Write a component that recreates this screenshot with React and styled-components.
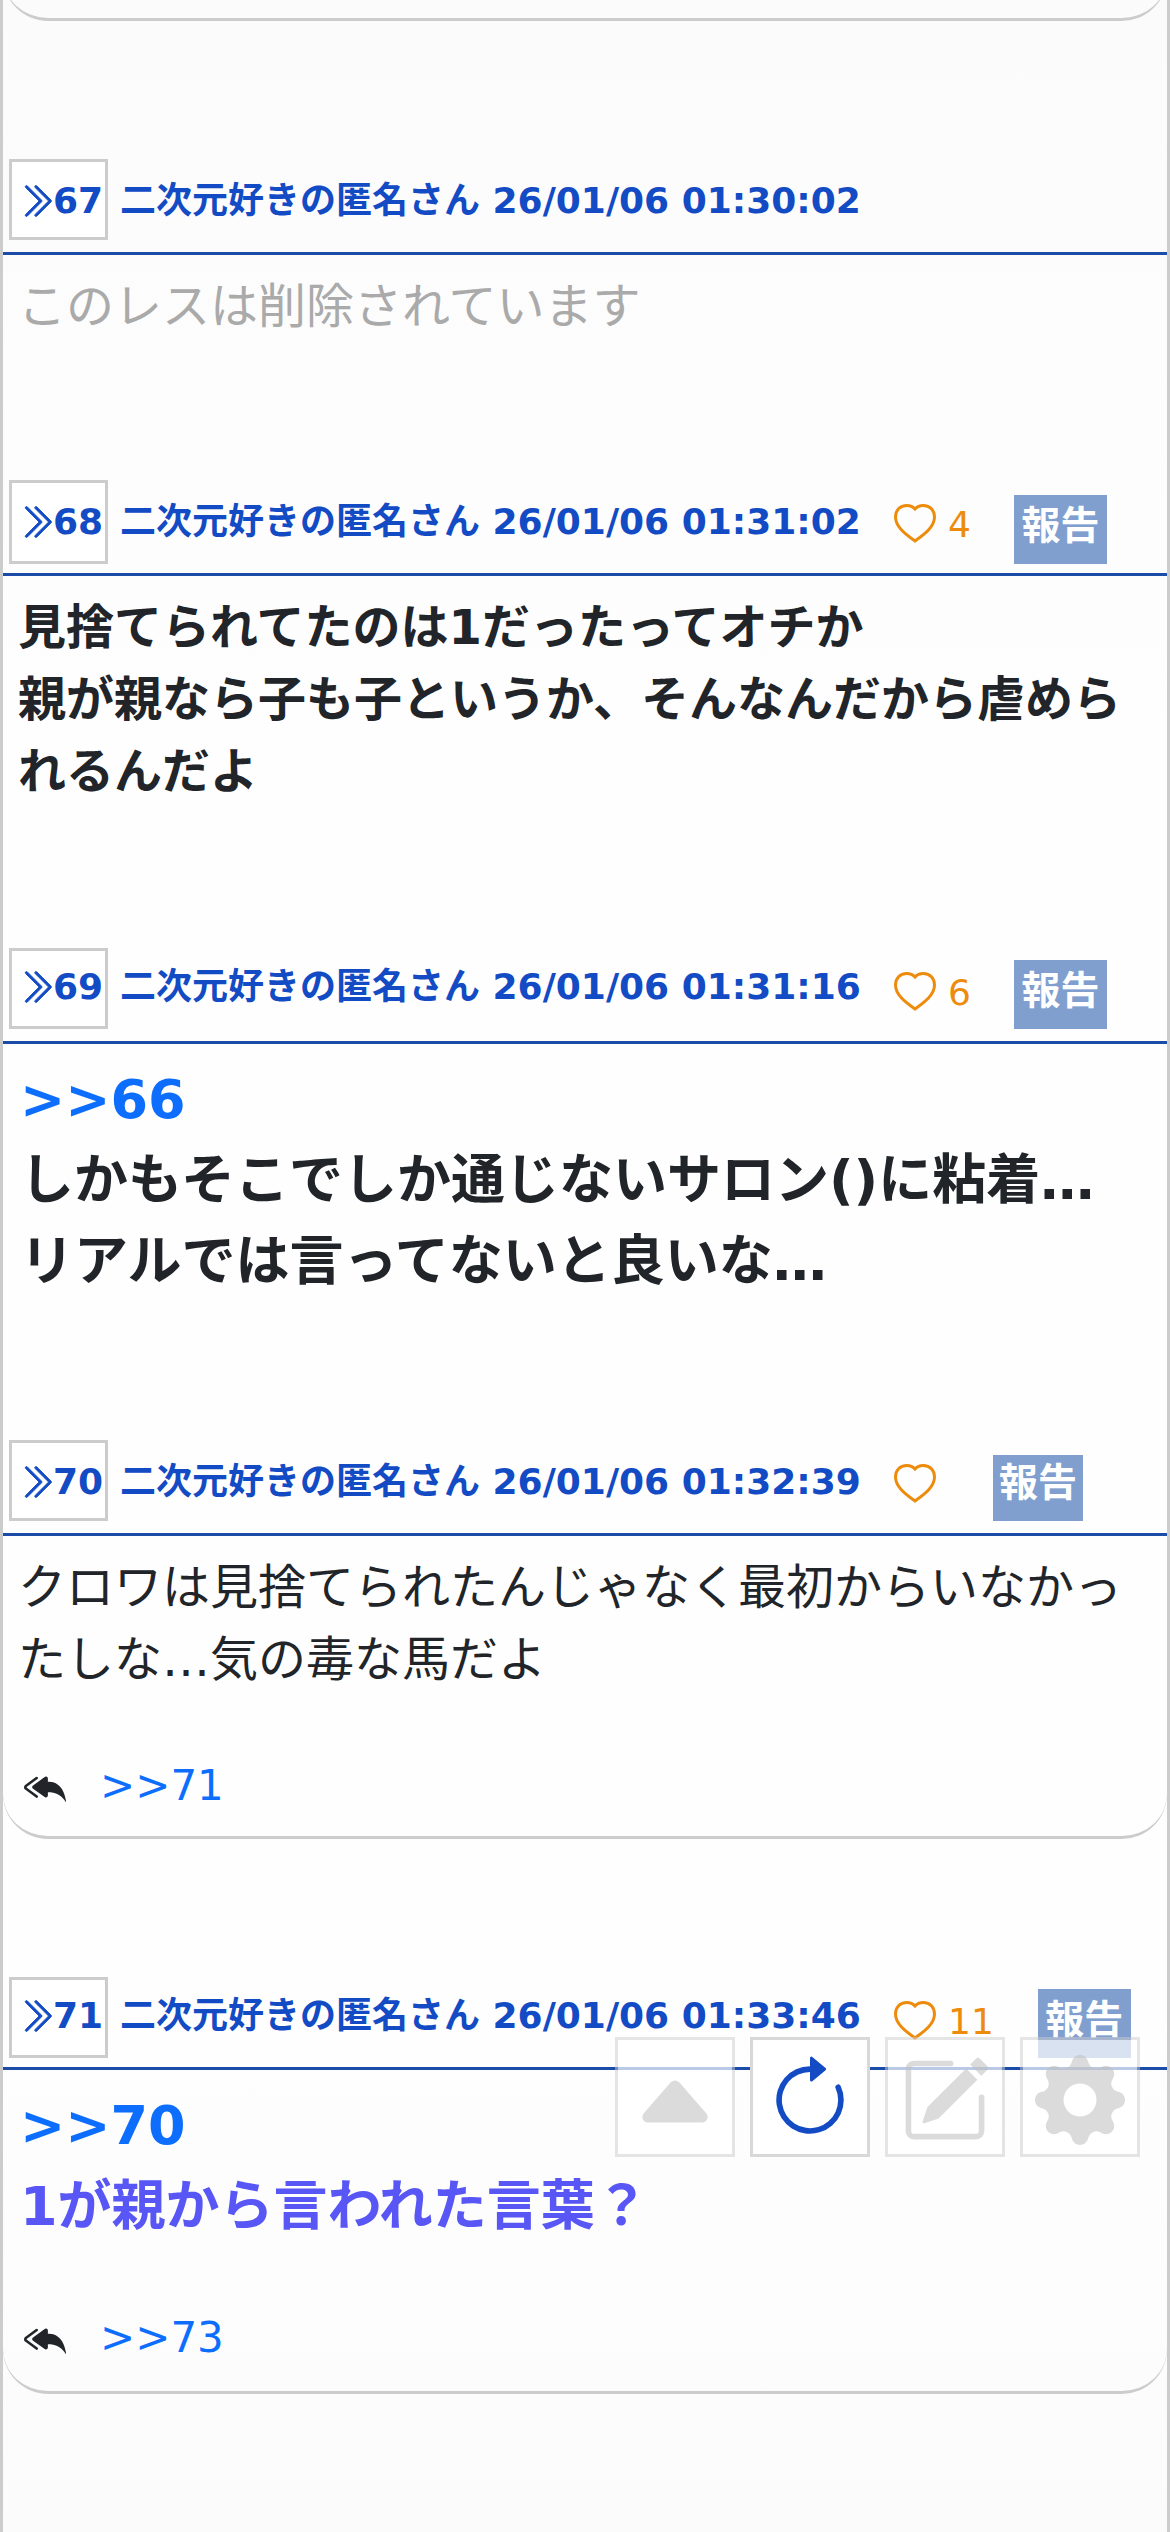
import React from 'react';
import styled, { createGlobalStyle } from 'styled-components';
import {
    BsArrowClockwise,
    BsCaretUpFill,
    BsChevronDoubleRight,
    BsGearFill,
    BsPencilSquare,
    BsReplyAllFill,
} from 'react-icons/bs';

const GlobalStyle = createGlobalStyle`
    * {
        box-sizing: border-box;
    }

    body {
        margin: 0;
        background-color: #fcfcfc;
        color: #212529;
        font-family: 'DejaVu Sans', 'Noto Sans CJK JP', sans-serif;
    }
`;

const Container = styled.div`
    height: 2532px;
    overflow: hidden;
    border-left: 3px solid #ccc;
    border-right: 3px solid #ccc;
    background: linear-gradient(#fbfbfb, #fefefe 30%, #fefefe 80%, #fbfbfb);
`;

const Post = styled.div`
    height: ${(props) => props.$height}px;
    margin-bottom: ${(props) => (props.$closed ? 138 : 0)}px;
    border-bottom: ${(props) => (props.$closed ? '3px solid #ccc' : 'none')};
    border-radius: ${(props) => (props.$closed ? '0 0 45px 45px' : '0')};
`;

const PreviousPost = styled(Post)`
    margin-top: -69px;
`;

const Header = styled.div`
    display: flex;
    align-items: stretch;
    height: ${(props) => props.$height}px;
    padding: 0 0 ${(props) => props.$gap}px 6px;
    border-bottom: 3px solid #1a4ca8;
    color: #124bc4;
    font-size: 36px;
    line-height: 54px;
    white-space: nowrap;
`;

const Number = styled.div`
    display: flex;
    width: 99px;
    flex-shrink: 0;
    padding: ${(props) => props.$top - 3}px 0 0 5px;
    border: 3px solid #ccc;
    background-color: white;
    font-weight: bold;

    svg {
        flex-shrink: 0;
        width: 38px;
        height: 38px;
        margin: 8px -2px 0 0;
        stroke-width: 0.4;
    }
`;

const Name = styled.div`
    width: 738px;
    margin-left: 12px;
    padding-top: ${(props) => props.$top}px;
    font-weight: bold;
`;

const Good = styled.div`
    display: flex;
    margin-left: 36px;
    padding-top: 18px;
    color: #ed8c0c;

    svg {
        width: 42px;
        height: 39px;
        margin: 6px 12px 0 0;
    }
`;

const Report = styled.div`
    width: ${(props) => props.$width}px;
    margin: ${(props) => props.$top}px 0 0 ${(props) => props.$left}px;
    background-color: #809fcf;
    color: white;
    font-size: 39px;
    font-weight: bold;
    line-height: ${(props) => props.$line}px;
    text-align: center;
`;

const Body = styled.div`
    padding: 15px ${(props) => (props.$large ? 17 : 15)}px 0;
    color: ${(props) => props.$color || '#212529'};
    font-size: ${(props) => (props.$large ? 54 : 48)}px;
    font-weight: ${(props) => (props.$bold ? 'bold' : 'normal')};
    line-height: 1.5;
    white-space: nowrap;
`;

const Anchor = styled.a`
    color: #0d6efd;
`;

const Replies = styled.div`
    display: flex;
    align-items: center;
    gap: 34px;
    margin-top: 59px;
    padding-left: 21px;
    font-size: 42px;
    line-height: 63px;

    svg {
        width: 42px;
        height: 42px;
        margin-top: 2px;
    }
`;

const Toolbar = styled.div`
    position: fixed;
    left: 615px;
    top: 2037px;
    display: flex;
    gap: 15px;
`;

const ToolButton = styled.div`
    display: flex;
    align-items: center;
    justify-content: center;
    width: 120px;
    height: 120px;
    padding-top: 6px;
    border: 3px solid ${(props) => (props.$active ? '#d8d8d8' : 'rgba(204, 204, 204, 0.5)')};
    background-color: ${(props) => (props.$active ? 'white' : 'rgba(255, 255, 255, 0.7)')};
    background-clip: padding-box;
    color: ${(props) => (props.$active ? '#124bc4' : 'rgba(190, 190, 190, 0.55)')};

    svg {
        width: 90px;
        height: 90px;
    }
`;

const posts = [
    {
        no: 67,
        time: '01:30:02',
        height: 321,
        box: 81,
        gap: 12,
        top: 14.5,
        deleted: true,
        lines: ['このレスは削除されています'],
    },
    {
        no: 68,
        time: '01:31:02',
        height: 468,
        box: 84,
        gap: 9,
        top: 14.5,
        good: 4,
        report: { top: 15, left: 43, width: 93, line: 62 },
        bold: true,
        lines: [
            '見捨てられてたのは1だったってオチか',
            '親が親なら子も子というか、そんなんだから虐めら',
            'れるんだよ',
        ],
    },
    {
        no: 69,
        time: '01:31:16',
        height: 492,
        box: 81,
        gap: 12,
        top: 11.5,
        good: 6,
        report: { top: 12, left: 43, width: 93, line: 62 },
        bold: true,
        large: true,
        anchor: '>>66',
        lines: ['しかもそこでしか通じないサロン()に粘着…', 'リアルでは言ってないと良いな…'],
    },
    {
        no: 70,
        time: '01:32:39',
        height: 399,
        box: 81,
        gap: 12,
        top: 14.5,
        report: { top: 15, left: 45, width: 90, line: 55 },
        lines: ['クロワは見捨てられたんじゃなく最初からいなかっ', 'たしな…気の毒な馬だよ'],
        reply: '>>71',
        closed: true,
    },
    {
        no: 71,
        time: '01:33:46',
        height: 417,
        box: 81,
        gap: 9,
        top: 11.5,
        good: 11,
        report: { top: 12, left: 44, width: 93, line: 62 },
        bold: true,
        large: true,
        anchor: '>>70',
        color: '#5856f5',
        lines: ['1が親から言われた言葉？'],
        reply: '>>73',
        closed: true,
    },
];

const Heart = () => (
    <svg viewBox="0 0 42 39" fill="none" stroke="currentColor" strokeWidth="3">
        <path d="M21 5C19 2.7 16 1.5 12.7 1.5C6 1.5 1.5 6.5 1.5 13C1.5 22.5 10.5 29.5 21 37C31.5 29.5 40.5 22.5 40.5 13C40.5 6.5 36 1.5 29.3 1.5C26 1.5 23 2.7 21 5Z" />
    </svg>
);

const App = () => {
    return (
        <>
            <GlobalStyle />
            <Container>
                <PreviousPost $height={90} $closed />
                {posts.map((post) => (
                    <Post key={post.no} $height={post.height} $closed={post.closed}>
                        <Header $height={post.box + post.gap + 3} $gap={post.gap}>
                            <Number $top={post.top}>
                                <BsChevronDoubleRight />
                                {post.no}
                            </Number>
                            <Name $top={post.top}>二次元好きの匿名さん 26/01/06 {post.time}</Name>
                            {!post.deleted && (
                                <>
                                    <Good>
                                        <Heart />
                                        {post.good}
                                    </Good>
                                    <Report
                                        $top={post.report.top}
                                        $left={post.report.left}
                                        $width={post.report.width}
                                        $line={post.report.line}
                                    >
                                        報告
                                    </Report>
                                </>
                            )}
                        </Header>
                        <Body $large={post.large} $bold={post.bold} $color={post.deleted ? '#aaa' : post.color}>
                            {post.anchor && <div><Anchor>{post.anchor}</Anchor></div>}
                            {post.lines.map((line) => (
                                <div key={line}>{line}</div>
                            ))}
                        </Body>
                        {post.reply && (
                            <Replies>
                                <BsReplyAllFill />
                                <Anchor>{post.reply}</Anchor>
                            </Replies>
                        )}
                    </Post>
                ))}
                <Toolbar>
                    <ToolButton><BsCaretUpFill /></ToolButton>
                    <ToolButton $active><BsArrowClockwise /></ToolButton>
                    <ToolButton><BsPencilSquare /></ToolButton>
                    <ToolButton><BsGearFill /></ToolButton>
                </Toolbar>
            </Container>
        </>
    );
};

export default App;
